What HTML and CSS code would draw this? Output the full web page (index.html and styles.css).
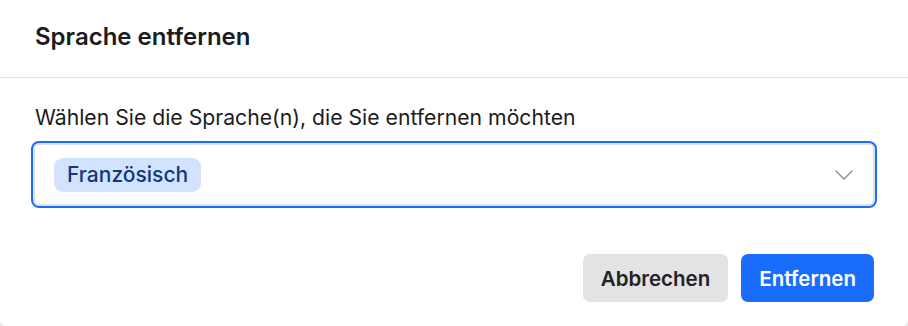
FILE: index.html
```html
<!DOCTYPE html>
<html lang="de">
<head>
<meta charset="utf-8">
<title>Sprache entfernen</title>
<link rel="stylesheet" href="styles.css">
</head>
<body>
<div class="dialog">
  <div class="header"><h1 class="title">Sprache entfernen</h1></div>
  <div class="content">
    <div class="label">Wählen Sie die Sprache(n), die Sie entfernen möchten</div>
    <div class="select">
      <span class="chip">Französisch</span>
      <svg class="chevron" width="18" height="10" viewBox="0 0 18 10"><path d="M1 1 L9 9 L17 1" fill="none" stroke="#8e8e93" stroke-width="1.4" stroke-linecap="round" stroke-linejoin="round"/></svg>
    </div>
  </div>
  <div class="footer">
    <button class="btn btn-secondary">Abbrechen</button>
    <button class="btn btn-primary">Entfernen</button>
  </div>
</div>
</body>
</html>
```
FILE: styles.css
```css
html, body {
  margin: 0;
  padding: 0;
  background: #e9e9eb;
}
body {
  font-family: Inter, "Noto Sans", sans-serif;
  color: #1c1c1e;
}
.dialog {
  width: 908px;
  height: 326px;
  background: #fff;
  border-radius: 0 0 6px 6px;
  box-sizing: border-box;
  display: flex;
  flex-direction: column;
}
.header {
  height: 78px;
  box-sizing: border-box;
  border-bottom: 1px solid #e2e2e4;
  display: flex;
  align-items: center;
  padding: 0 35px 4px;
}
.title {
  margin: 0;
  font-size: 24px;
  font-weight: 600;
  line-height: 28px;
  color: #1c1c1e;
}
.content {
  padding: 0 33px;
}
.label {
  margin-top: 27px;
  padding-left: 2px;
  font-size: 21.2px;
  line-height: 24px;
  color: #1c1c1e;
}
.select {
  margin-top: 14px;
  height: 63px;
  box-sizing: border-box;
  border: 2px solid #e2e2e4;
  border-radius: 6px;
  outline: 2px solid #1a6dfb;
  outline-offset: 0px;
  display: flex;
  align-items: center;
  justify-content: space-between;
  padding: 0 20px 0 19px;
}
.chip {
  height: 34px;
  display: inline-flex;
  align-items: center;
  padding: 0 13px;
  background: #d3e3fd;
  color: #0f3a7d;
  border-radius: 9px;
  font-size: 21px;
  font-weight: 500;
}
.chevron {
  display: block;
}
.footer {
  margin-top: 48px;
  display: flex;
  justify-content: flex-end;
  gap: 13px;
  padding: 0 34px;
}
.btn {
  height: 48px;
  border: none;
  border-radius: 7px;
  padding: 0 18px;
  font-family: Inter, "Noto Sans", sans-serif;
  font-size: 20.5px;
  font-weight: 600;
  cursor: pointer;
}
.btn-secondary {
  background: #e3e3e5;
  color: #222224;
}
.btn-primary {
  background: #1a6dfb;
  color: #fff;
}
```
